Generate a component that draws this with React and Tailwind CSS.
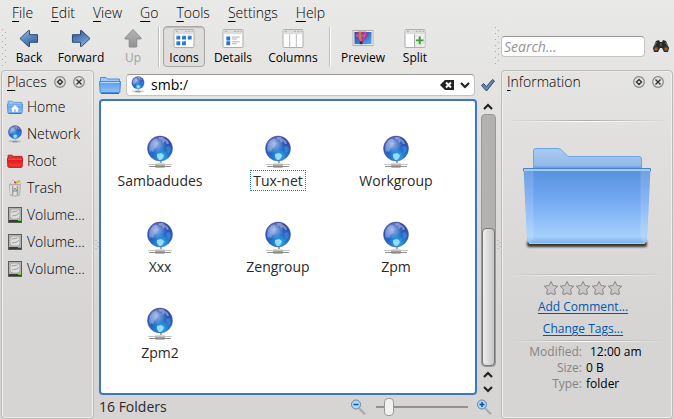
import React from "react";

function Globe({ className }) {
  return (
    <svg viewBox="0 0 28 34" className={className} aria-hidden="true">
      <defs>
        <radialGradient id="globeFill" cx="0.56" cy="0.82" r="0.85">
          <stop offset="0" stopColor="#35b5f0" />
          <stop offset="0.35" stopColor="#2273c9" />
          <stop offset="0.75" stopColor="#2b4db0" />
          <stop offset="1" stopColor="#34348c" />
        </radialGradient>
        <radialGradient id="globeShine" cx="0.35" cy="0.3" r="0.4">
          <stop offset="0" stopColor="#c5d8f6" stopOpacity="0.75" />
          <stop offset="1" stopColor="#c5d8f6" stopOpacity="0" />
        </radialGradient>
        <linearGradient id="plugFill" x1="0" y1="0" x2="0" y2="1">
          <stop offset="0" stopColor="#e8e8e8" />
          <stop offset="1" stopColor="#6d6d6d" />
        </linearGradient>
      </defs>
      <path d="M15 25v4" stroke="#aaa" strokeWidth="2" />
      <path d="M2 29.500h24" stroke="#c5c5c5" />
      <path d="M3 31.500h22" stroke="#8f8f8f" />
      <rect x="9" y="28" width="10" height="4.500" rx="1" fill="url(#plugFill)" />
      <circle cx="14" cy="13.500" r="12.500" fill="url(#globeFill)" stroke="#4a58aa" strokeWidth="0.500" />
      <circle cx="14" cy="13.500" r="12" fill="url(#globeShine)" />
      <path d="M4 9 7 5l3-1 2 1-1 2 2 1-2 2 0 2-3 2-1 3-2-1-1 2-1-4z" fill="#b3c8f0" opacity="0.45" />
      <path d="m13 2 4 0 5 4 1 3-2 0-2-3-2 2-1-3-3-1z" fill="#b7c4ea" opacity="0.55" />
      <path d="m11 19 4-1 3 2-1 3-2 2-2 0-2-3z" fill="#b6f0fb" opacity="0.75" />
      <path d="m20 12 4-1 1 4-3 4-1-4z" fill="#5aa1e5" opacity="0.4" />
    </svg>
  );
}

function Folder({ className, red, home }) {
  return (
    <svg viewBox="0 0 22 18" preserveAspectRatio="none" className={className} aria-hidden="true">
      <defs>
        <linearGradient id="smallBlue" x1="0" y1="0" x2="0" y2="1">
          <stop offset="0" stopColor="#5c9be8" />
          <stop offset="1" stopColor="#8ec2fa" />
        </linearGradient>
        <linearGradient id="smallRed" x1="0" y1="0" x2="0" y2="1">
          <stop offset="0" stopColor="#e01010" />
          <stop offset="1" stopColor="#f83c3c" />
        </linearGradient>
      </defs>
      <path d="M2 17.300h18" stroke="#555" strokeWidth="1.200" />
      <path
        d="M1.500 6V1.500H7L8.500 3h12v3z"
        fill={red ? "#d44" : "#a5c9f5"}
        stroke={red ? "#b00000" : "#4d8bdc"}
      />
      <path
        d="M.5 5.500h21L20.800 16.500H1.200z"
        fill={red ? "url(#smallRed)" : "url(#smallBlue)"}
        stroke={red ? "#c00000" : "#4789dc"}
      />
      <path d="M1.500 6.500h19" stroke={red ? "#ff9b9b" : "#b9dafc"} />
      {home && <path d="m11 6.500-5.500 5H7V15h3v-3h2v3h3v-3.500h1.500z" fill="#fff" />}
    </svg>
  );
}

function BigFolder() {
  return (
    <svg viewBox="0 0 132 104" className="h-[104px] w-[132px]" aria-hidden="true">
      <defs>
        <linearGradient id="front" x1="0" y1="0" x2="0" y2="1">
          <stop offset="0" stopColor="#5590dc" />
          <stop offset="0.4" stopColor="#72a7f3" />
          <stop offset="0.9" stopColor="#a5d0fb" />
          <stop offset="1" stopColor="#7db4ef" />
        </linearGradient>
        <linearGradient id="back" x1="0" y1="0" x2="0" y2="1">
          <stop offset="0" stopColor="#abcaf0" />
          <stop offset="0.8" stopColor="#94bbea" />
          <stop offset="1" stopColor="#5a91d6" />
        </linearGradient>
        <filter id="soft" x="-10%" y="-100%" width="120%" height="300%">
          <feGaussianBlur stdDeviation="1.200" />
        </filter>
      </defs>
      <rect x="6" y="95" width="120" height="6" rx="2" fill="#3b3433" filter="url(#soft)" />
      <path d="M12.500 23V5q0-2.500 2.500-2.500h22q2 0 3.500 1.500l6.500 6.500h71q2.500 0 2.500 2.500v10z" fill="url(#back)" stroke="#6fa3e8" />
      <path d="M2.500 22.500h127l-3.500 71q0 4-4 4h-112q-4 0-4-4z" fill="url(#front)" />
      <path d="M2.500 24.500h10v65q0 6-4 7l-2-2z" fill="#fff" opacity="0.150" />
      <path d="M129.500 24.500h-10v65q0 6 4 7l2-2z" fill="#fff" opacity="0.150" />
      <path d="M2.500 25v-2.500h127V25" fill="none" stroke="#4584d4" />
      <path d="M3 24h126" stroke="#bfe0fc" strokeWidth="1.500" />
      <path d="M8 97.500h116" stroke="#9fd0fb" />
    </svg>
  );
}

function Arrow({ dir }) {
  const turn = { left: "", right: "rotate(180 11 10)", up: "rotate(90 11 10)" }[dir];
  const gray = dir === "up";
  return (
    <svg viewBox="0 0 22 20" className="h-5 w-[22px]" aria-hidden="true">
      <defs>
        <linearGradient id="arrowBlue" x1="0" y1="0" x2="0.6" y2="1">
          <stop offset="0" stopColor="#a8c3e6" />
          <stop offset="0.5" stopColor="#5f8bc4" />
          <stop offset="1" stopColor="#3a64a0" />
        </linearGradient>
        <linearGradient id="arrowGray" x1="0" y1="0" x2="1" y2="0">
          <stop offset="0" stopColor="#b5b5b5" />
          <stop offset="1" stopColor="#929292" />
        </linearGradient>
      </defs>
      <path
        transform={turn}
        d="m1.500 10 9-8.500h1V6h8.500v8h-8.500v4.500h-1z"
        fill={gray ? "url(#arrowGray)" : "url(#arrowBlue)"}
        stroke={gray ? "#8c8c8c" : "#27436b"}
        strokeLinejoin="round"
      />
    </svg>
  );
}

function ViewIcon({ kind }) {
  return (
    <svg viewBox="0 0 22 20" className="h-5 w-[22px]" aria-hidden="true">
      <rect x="0.500" y="0.500" width="21" height="19" rx="1" fill="#fff" stroke="#a9a9a9" />
      <rect x="1" y="1" width="20" height="4.500" fill="#dcdcdc" />
      <path d="M2.500 2.500h2M12 2.500h2M15.500 2.500h2M19 2.500h1.500" stroke="#aaa" />
      {kind === "icons" && (
        <g fill="#2475cf">
          <path d="M3 7h4v4H3zM9 7h4v4H9zM15 7h4v4h-4zM3 13h4v4H3zM9 13h4v4H9z" />
          <path d="M3 7h2v1H3zM9 7h2v1H9zM15 7h2v1h-2zM3 13h2v1H3zM9 13h2v1H9z" fill="#8fc0f3" />
        </g>
      )}
      {kind === "details" && (
        <g>
          <path d="M4 8h4v4H4zM4 13h4v4H4z" fill="#2475cf" />
          <path d="M10 8.500h8M10 10.500h5M10 13.500h8M10 15.500h5" stroke="#aaa" />
        </g>
      )}
      {kind === "columns" && <path d="M7.500 5.500v14M14.500 5.500v14" stroke="#b5b5b5" />}
      {kind === "split" && (
        <g>
          <rect x="11" y="6" width="10" height="13" fill="#e6e6e6" />
          <path d="m11 11 5-5M11 16 21 6M13 19l8-8M18 19l3-3" stroke="#fff" />
          <path d="M10.500 5.500v14" stroke="#aaa" />
          <path d="M16 8v8M12 12h8" stroke="#35a52a" strokeWidth="2" />
        </g>
      )}
    </svg>
  );
}

function PreviewIcon() {
  return (
    <svg viewBox="0 0 22 20" className="h-5 w-[22px]" aria-hidden="true">
      <defs>
        <linearGradient id="sky" x1="0" y1="0" x2="1" y2="1">
          <stop offset="0" stopColor="#1440a0" />
          <stop offset="1" stopColor="#58a9f4" />
        </linearGradient>
      </defs>
      <rect x="0.500" y="1.500" width="21" height="16" fill="#fff" stroke="#aaa" />
      <rect x="2" y="3" width="18" height="13" fill="url(#sky)" />
      <path d="M3 5q1-2 3-2h8q2 1 2 4-1 3-5 6H8Q3 9 3 5z" fill="#a0349a" />
      <path d="M7 3h2l1 10H8Q5 8 7 3z" fill="#c9774c" />
      <path d="M13 3h1q1 4-3 10 1-5 2-10z" fill="#e04c92" />
      <path d="M4 6h2v2H4zM10 6h2v2h-2z" fill="#74a64b" />
      <path d="M7.500 13h3v3h-3z" fill="#4a2b20" />
    </svg>
  );
}

function Trash() {
  return (
    <svg viewBox="0 0 16 18" className="h-[18px] w-4" aria-hidden="true">
      <path d="m3 5 3-4 3 2 3-2 2 4z" fill="#eee" stroke="#aaa" strokeWidth="0.600" />
      <path d="m7 3 2 1" stroke="#d33" strokeWidth="1.500" />
      <path d="m9 4 4-2" stroke="#e0b020" strokeWidth="1.500" />
      <path d="M2.500 5.500h11l-1 11q-4.500 1.500-9 0z" fill="#cfcfcd" stroke="#b0b0b0" />
      <path d="M5.500 7v9M10.500 7v9" stroke="#9c9c9c" />
      <path d="M4 7v8M8 7v9" stroke="#f5f5f5" />
      <path d="m6 12 2-3 2 3z" fill="none" stroke="#888" />
    </svg>
  );
}

function Drive() {
  return (
    <svg viewBox="0 0 16 18" className="h-[18px] w-4" aria-hidden="true">
      <rect x="1.500" y="1.500" width="13" height="15" fill="#b5b5b5" stroke="#5d5d5d" />
      <rect x="3" y="3" width="10" height="10" rx="3" fill="#dedede" stroke="#9a9a9a" strokeWidth="0.700" />
      <path d="m4.500 6 6-1M5 10l5-1 2-2" stroke="#999" strokeWidth="0.900" fill="none" />
      <rect x="2" y="14" width="12" height="2" fill="#3a3a3a" />
      <path d="M11 14.500h3" stroke="#52d023" />
    </svg>
  );
}

function Magnifier({ plus }) {
  return (
    <svg viewBox="0 0 16 16" className="size-4" aria-hidden="true">
      <path d="m9 9 6 6" stroke="#999" strokeWidth="2" />
      <path d="m9.500 9 5.500 5.500" stroke="#ddd" strokeWidth="0.700" />
      <circle cx="6" cy="5.500" r="4.500" fill="#aadcfa" stroke="#5f84a8" />
      <path d={plus ? "M3.500 5.500h5M6 3v5" : "M3.500 5.500h5"} stroke="#164a94" strokeWidth="1.500" />
    </svg>
  );
}

function Binoculars() {
  return (
    <svg viewBox="0 0 18 14" className="h-3.5 w-[18px]" aria-hidden="true">
      <path d="m4 2 3-1 1 2h2l1-2 3 1 3 7-1 4h-4l-2-4H8l-2 4H2L1 9z" fill="#292929" />
      <path d="m4.500 3-2 4M13.500 3l2 4M9 4v3" stroke="#888" strokeWidth="0.800" />
      <circle cx="4" cy="10" r="2" fill="#b65a1c" stroke="#444" />
      <circle cx="14" cy="10" r="2" fill="#b65a1c" stroke="#444" />
    </svg>
  );
}

function Chevron({ up }) {
  return (
    <svg viewBox="0 0 10 8" className="h-2 w-2.5" aria-hidden="true">
      <path d={up ? "m1 6 4-4 4 4" : "m1 2 4 4 4-4"} fill="none" stroke="#222" strokeWidth="2.200" />
    </svg>
  );
}

function Grip() {
  return (
    <svg viewBox="0 0 6 38" className="h-[38px] w-1.5 shrink-0" aria-hidden="true">
      <path d="M2.500 1v37" stroke="#aaa" strokeDasharray="1 5" />
      <path d="M5.500 4v34" stroke="#aaa" strokeDasharray="1 5" />
    </svg>
  );
}

function SplitGrip() {
  return (
    <div className="flex w-[5px] shrink-0 items-center justify-center">
      <svg viewBox="0 0 4 9" className="h-[9px] w-1" aria-hidden="true">
        <path d="M1 0v9" stroke="#aaa" strokeDasharray="1 3" />
        <path d="M3 2v7" stroke="#aaa" strokeDasharray="1 3" />
      </svg>
    </div>
  );
}

function PanelButtons() {
  return (
    <div className="flex gap-[7px]">
      {["Float", "Close"].map((name) => (
        <button key={name} type="button" aria-label={name} className="size-3">
          <svg viewBox="0 0 12 12" className="size-3" aria-hidden="true">
            <circle cx="6" cy="6" r="5.300" fill="#e4e4e3" stroke="#858585" strokeWidth="1.200" />
            <path
              d={name === "Float" ? "m6 3.500 2.500 2.500-2.500 2.500L3.500 6z" : "m3.500 3.500 5 5m0-5-5 5"}
              fill="none"
              stroke="#333"
              strokeWidth="1.400"
            />
          </svg>
        </button>
      ))}
    </div>
  );
}

function Panel({ title, className, children }) {
  return (
    <section className={`flex shrink-0 flex-col rounded border border-[#bcbbba] shadow-[inset_0_0_0_1px_#efeeed] ${className}`}>
      <header className="flex h-[22px] items-center justify-between pr-2 pl-[5px]">
        <h2>
          <Mnemonic text={title} />
        </h2>
        <PanelButtons />
      </header>
      {children}
    </section>
  );
}

function Mnemonic({ text }) {
  return (
    <>
      <span className="underline underline-offset-3">{text[0]}</span>
      {text.slice(1)}
    </>
  );
}

function Tool({ label, children, className = "w-11", active, disabled }) {
  return (
    <button
      type="button"
      disabled={disabled}
      className={`flex h-[41px] shrink-0 flex-col items-center rounded border pt-0.5 text-xs leading-4 font-normal ${className} ${
        active ? "border-[#aaa9a8] bg-[#dfdedd] shadow-[inset_0_1px_1px_#bbb]" : "border-transparent"
      } ${disabled ? "text-[#a3a2a1]" : ""}`}
    >
      {children}
      <span className="mt-0.5">{label}</span>
    </button>
  );
}

function Divider() {
  return <div className="h-10 w-0.5 shrink-0 border-r border-l border-r-white border-l-[#c0bfbe]" />;
}

function Rule() {
  return (
    <div className="mx-1">
      <div className="h-px bg-linear-to-r from-transparent via-[#aaa] to-transparent" />
      <div className="h-px bg-linear-to-r from-transparent via-white to-transparent" />
    </div>
  );
}

const places = [
  ["Home", <Folder home className="h-3.5 w-4" />],
  ["Network", <Globe className="h-[18px] w-4" />],
  ["Root", <Folder red className="h-3.5 w-4" />],
  ["Trash", <Trash />],
  ["Volume…", <Drive />],
  ["Volume…", <Drive />],
  ["Volume…", <Drive />],
];

const groups = ["Sambadudes", "Tux-net", "Workgroup", "Xxx", "Zengroup", "Zpm", "Zpm2"];

const details = [
  ["Modified:", "12:00 am"],
  ["Size:", "0 B"],
  ["Type:", "folder"],
];

export default function App() {
  return (
    <div className="flex min-h-screen flex-col bg-linear-to-b from-[#e9e9e8] via-[#dfdedd] via-40% to-[#d6d5d4] to-75% font-['Open_Sans','Noto_Sans',sans-serif] text-sm leading-5 font-light text-black">
      <nav className="flex h-6 gap-[18px] px-3 pt-0.5">
        {["File", "Edit", "View", "Go", "Tools", "Settings", "Help"].map((item) => (
          <button key={item} type="button" className="leading-5">
            <Mnemonic text={item} />
          </button>
        ))}
      </nav>

      <div className="flex h-[46px] items-start pt-0.5 pr-1">
        <div className="flex min-w-0 flex-1 items-center">
          <Grip />
          <Tool label="Back" className="w-[46px]"><Arrow dir="left" /></Tool>
          <Tool label="Forward" className="w-[58px]"><Arrow dir="right" /></Tool>
          <Tool label="Up" disabled className="w-[46px]"><Arrow dir="up" /></Tool>
          <div className="w-0.5" />
          <Divider />
          <div className="w-[3px]" />
          <Tool label="Icons" active className="w-[42px]"><ViewIcon kind="icons" /></Tool>
          <Tool label="Details" className="w-14"><ViewIcon kind="details" /></Tool>
          <Tool label="Columns" className="w-16"><ViewIcon kind="columns" /></Tool>
          <div className="w-1" />
          <Divider />
          <div className="w-1" />
          <Tool label="Preview" className="w-14"><PreviewIcon /></Tool>
          <Tool label="Split" className="w-12"><ViewIcon kind="split" /></Tool>
        </div>
        <Grip />
        <div className="flex h-10 items-center gap-[7px] pl-0.5">
          <input
            type="search"
            aria-label="Search"
            placeholder="Search..."
            className="h-[21px] w-36 rounded border border-[#c5c4c3] border-t-[#989796] bg-white px-0.5 font-normal outline-none placeholder:text-[#959493] placeholder:italic"
          />
          <button type="button" aria-label="Find"><Binoculars /></button>
        </div>
      </div>

      <div className="flex flex-1 px-px pb-px">
        <Panel title="Places" className="w-[93px]">
          <ul>
            {places.map(([name, icon], i) => (
              <li key={i}>
                <button type="button" className="flex h-[27px] w-full items-center gap-1 pl-[5px]">
                  {icon}
                  <span>{name}</span>
                </button>
              </li>
            ))}
          </ul>
        </Panel>
        <SplitGrip />

        <main className="flex min-w-0 flex-1 flex-col">
          <div className="flex h-[29px] items-center gap-[5px]">
            <Folder className="h-[18px] w-[22px]" />
            <div className="flex h-[22px] min-w-0 flex-1 items-center gap-1.5 rounded border border-[#c5c4c3] border-t-[#989796] bg-white px-1">
              <Globe className="h-[17px] w-3.5" />
              <input aria-label="Location" defaultValue="smb:/" className="min-w-0 flex-1 font-normal outline-none" />
              <button type="button" aria-label="Clear">
                <svg viewBox="0 0 14 10" className="h-2.5 w-3.5" aria-hidden="true">
                  <path d="m0 5 5-5h9v10H5z" fill="#222" />
                  <path d="m6 2.500 5 5m0-5-5 5" stroke="#fff" strokeWidth="2" />
                </svg>
              </button>
              <button type="button" aria-label="Show history"><Chevron /></button>
            </div>
            <button type="button" aria-label="Go to location">
              <svg viewBox="0 0 16 14" className="h-3.5 w-4" aria-hidden="true">
                <path d="m1.500 7.500 2-2 3 3 6-7 2 1.500-8 10z" fill="#6687ad" stroke="#2e4a6c" strokeLinejoin="round" />
              </svg>
            </button>
          </div>

          <div className="flex min-h-0 flex-1 gap-[3px]">
            <div className="grid flex-1 grid-cols-[repeat(auto-fill,118px)] content-start rounded border-2 border-[#3a78c2] bg-white pt-[34px]">
              {groups.map((name) => (
                <button key={name} type="button" className="flex h-[86px] flex-col items-center">
                  <Globe className="h-[34px] w-7" />
                  <span
                    className={`mt-px border border-dotted px-0.5 leading-[19px] font-normal text-[#2a2928] ${
                      name === "Tux-net" ? "border-[#2a6fc4]" : "border-transparent"
                    }`}
                  >
                    {name}
                  </span>
                </button>
              ))}
            </div>
            <div className="flex w-4 flex-col items-center">
              <button type="button" aria-label="Scroll up" className="flex h-[15px] items-center"><Chevron up /></button>
              <div className="flex w-[15px] flex-1 flex-col justify-end rounded-sm border border-[#999897] bg-[#b3b2b1]">
                <div className="h-[55%] rounded-sm border border-[#777] bg-linear-to-r from-[#eee] to-[#c8c7c6]" />
              </div>
              <button type="button" aria-label="Page up" className="flex h-4 items-center"><Chevron up /></button>
              <button type="button" aria-label="Scroll down" className="flex h-3 items-center"><Chevron /></button>
            </div>
          </div>

          <footer className="flex h-6 items-center">
            <span className="flex-1 font-normal text-[#2a2928]">16 Folders</span>
            <Magnifier />
            <input
              type="range"
              aria-label="Icon size"
              defaultValue="10"
              className="mr-2 ml-2.5 h-[18px] w-[92px] appearance-none bg-transparent [&::-webkit-slider-runnable-track]:h-0.5 [&::-webkit-slider-runnable-track]:bg-[#929190] [&::-webkit-slider-thumb]:-mt-2 [&::-webkit-slider-thumb]:h-[18px] [&::-webkit-slider-thumb]:w-2.5 [&::-webkit-slider-thumb]:appearance-none [&::-webkit-slider-thumb]:rounded [&::-webkit-slider-thumb]:border [&::-webkit-slider-thumb]:border-[#999] [&::-webkit-slider-thumb]:bg-[#f2f2f1]"
            />
            <Magnifier plus />
            <div className="w-1" />
          </footer>
        </main>
        <SplitGrip />

        <Panel title="Information" className="w-[172px]">
          <div className="pt-[27px]">
            <Rule />
            <div className="flex h-[152px] items-center justify-center"><BigFolder /></div>
            <Rule />
          </div>
          <div className="flex flex-col items-center pt-1 pr-2 text-xs leading-4 font-normal">
            <div className="flex" role="img" aria-label="Not rated">
              {[1, 2, 3, 4, 5].map((n) => (
                <svg key={n} viewBox="0 0 16 16" className="size-4" aria-hidden="true">
                  <path
                    d="m8 1.500 2 4 4.800.7-3.300 3.200.9 4.600-1.400.500L8 13l-3 1.500-1.400-.5.9-4.600L1.200 6.200 6 5.500z"
                    fill="#c9c8c7"
                    stroke="#888"
                    strokeLinejoin="round"
                  />
                </svg>
              ))}
            </div>
            <a href="#comment" className="mt-[3px] text-[#0057ae] underline underline-offset-2">Add Comment...</a>
            <a href="#tags" className="mt-1.5 mb-[3px] text-[#0057ae] underline underline-offset-2">Change Tags...</a>
          </div>
          <Rule />
          <table className="mt-0.5 ml-5 w-32 text-xs leading-4 font-normal">
            <tbody>
              {details.map(([name, value]) => (
                <tr key={name}>
                  <th scope="row" className="w-[60px] text-right font-normal text-[#858483]">{name}</th>
                  <td className={`whitespace-nowrap ${name === "Modified:" ? "pl-2" : "pl-1"}`}>{value}</td>
                </tr>
              ))}
            </tbody>
          </table>
        </Panel>
      </div>
    </div>
  );
}
